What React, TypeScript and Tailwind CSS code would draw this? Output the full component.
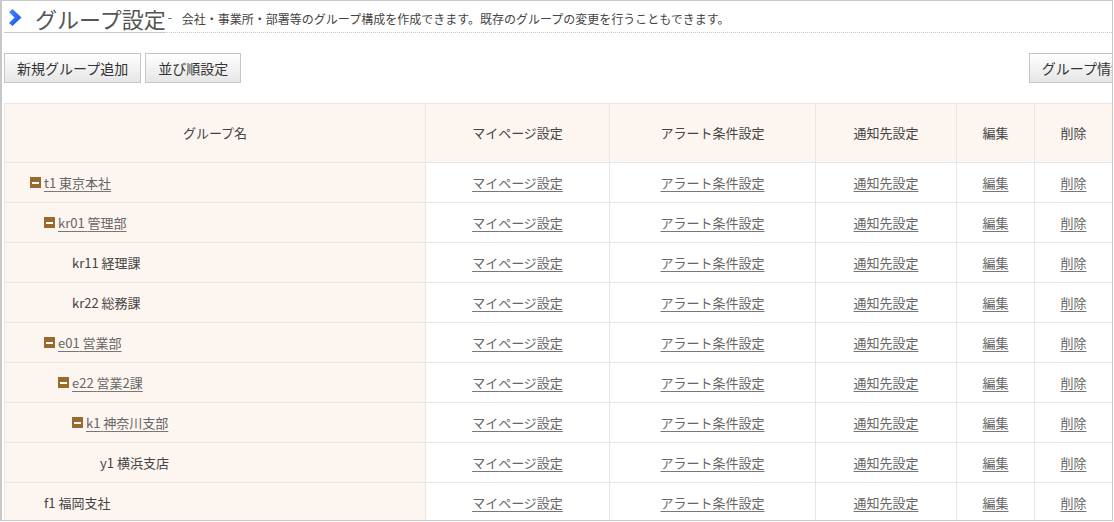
import React from 'react';

type Group = { code: string; name: string; level: number; hasChildren: boolean };

const groups: Group[] = [
  { code: 't1', name: '東京本社', level: 0, hasChildren: true },
  { code: 'kr01', name: '管理部', level: 1, hasChildren: true },
  { code: 'kr11', name: '経理課', level: 2, hasChildren: false },
  { code: 'kr22', name: '総務課', level: 2, hasChildren: false },
  { code: 'e01', name: '営業部', level: 1, hasChildren: true },
  { code: 'e22', name: '営業2課', level: 2, hasChildren: true },
  { code: 'k1', name: '神奈川支部', level: 3, hasChildren: true },
  { code: 'y1', name: '横浜支店', level: 4, hasChildren: false },
  { code: 'f1', name: '福岡支社', level: 0, hasChildren: false },
];

const indent = ['pl-[25px]', 'pl-[39px]', 'pl-[53px]', 'pl-[67px]', 'pl-[81px]'];

const font = { fontFamily: '"Noto Sans CJK JP", "Noto Sans", sans-serif' };

const Chevron = () => (
  <svg width="13" height="17" viewBox="0 0 13 17" className="ml-[5px] mb-[6px] shrink-0">
    <defs>
      <linearGradient id="chev" x1="0" y1="0" x2="1" y2="1">
        <stop offset="0" stopColor="#3f8cff" />
        <stop offset="1" stopColor="#1e4fe0" />
      </linearGradient>
    </defs>
    <polygon points="0,3 3.5,0 12.5,8.5 3.5,17 0,14 5.5,8.5" fill="url(#chev)" />
  </svg>
);

const MinusBox = () => (
  <span className="flex items-center justify-center w-[11px] h-[11px] bg-[#9a6a2c] mr-[3px] shrink-0">
    <span className="block w-[7px] h-[2px] bg-white" />
  </span>
);

const Btn: React.FC<{ children: React.ReactNode }> = ({ children }) => (
  <button className="h-[30px] px-[12px] shrink-0 border border-[#c6c6c6] bg-gradient-to-b from-white to-[#e6e6e6] text-[14px] text-[#333] whitespace-nowrap">
    {children}
  </button>
);

const Link: React.FC<{ children: React.ReactNode }> = ({ children }) => (
  <a className="text-[#666] underline underline-offset-[3px] decoration-[#777] cursor-pointer">{children}</a>
);

export default function App() {
  return (
    <div
      className="w-[1113px] h-[521px] overflow-hidden border-t border-r border-b border-l-2 border-[#c8c8c8] bg-white pl-[2px]"
      style={font}
    >
      {/* Title */}
      <div className="flex items-end w-[1200px] border-b border-dotted border-[#c8c8c8] pt-[3px]">
        <div className="flex items-end border-b border-[#c8c8c8] -mb-px">
          <Chevron />
          <h1 className="ml-[13px] text-[22px] leading-[28px] text-[#555] font-normal whitespace-nowrap">グループ設定</h1>
        </div>
        <span className="ml-[2px] mb-[6px] text-[12px] text-[#555] whitespace-nowrap">-</span>
        <p className="ml-[10px] mb-[5px] text-[12px] leading-[16px] text-[#444] whitespace-nowrap">
          会社・事業所・部署等のグループ構成を作成できます。既存のグループの変更を行うこともできます。
        </p>
      </div>

      {/* Buttons */}
      <div className="flex w-[1190px] gap-[4px] mt-[20px]">
        <Btn>新規グループ追加</Btn>
        <Btn>並び順設定</Btn>
        <div className="flex-1" />
        <Btn>グループ情報一括更新</Btn>
      </div>

      {/* Table */}
      <table className="mt-[20px] w-[1108px] border-collapse table-fixed text-[13px]">
        <colgroup>
          <col className="w-[421px]" />
          <col className="w-[184px]" />
          <col className="w-[206px]" />
          <col className="w-[141px]" />
          <col className="w-[78px]" />
          <col className="w-[78px]" />
        </colgroup>
        <thead>
          <tr className="h-[59px] bg-[#fdf5ef] text-[#444]">
            {['グループ名', 'マイページ設定', 'アラート条件設定', '通知先設定', '編集', '削除'].map((h) => (
              <th key={h} className="border border-[#e6e6e6] font-normal">
                {h}
              </th>
            ))}
          </tr>
        </thead>
        <tbody>
          {groups.map((g) => (
            <tr key={g.code} className="h-[40px]">
              <td className={`border border-[#e6e6e6] bg-[#fdf5ef] text-left ${indent[g.level]}`}>
                <div className="flex items-center whitespace-nowrap">
                  {g.hasChildren ? (
                    <>
                      <MinusBox />
                      <Link>
                        {g.code} {g.name}
                      </Link>
                    </>
                  ) : (
                    <span className="pl-[14px] text-[#444]">
                      {g.code} {g.name}
                    </span>
                  )}
                </div>
              </td>
              <td className="border border-[#e6e6e6] text-center">
                <Link>マイページ設定</Link>
              </td>
              <td className="border border-[#e6e6e6] text-center">
                <Link>アラート条件設定</Link>
              </td>
              <td className="border border-[#e6e6e6] text-center">
                <Link>通知先設定</Link>
              </td>
              <td className="border border-[#e6e6e6] text-center">
                <Link>編集</Link>
              </td>
              <td className="border border-[#e6e6e6] text-center">
                <Link>削除</Link>
              </td>
            </tr>
          ))}
        </tbody>
      </table>
    </div>
  );
}
